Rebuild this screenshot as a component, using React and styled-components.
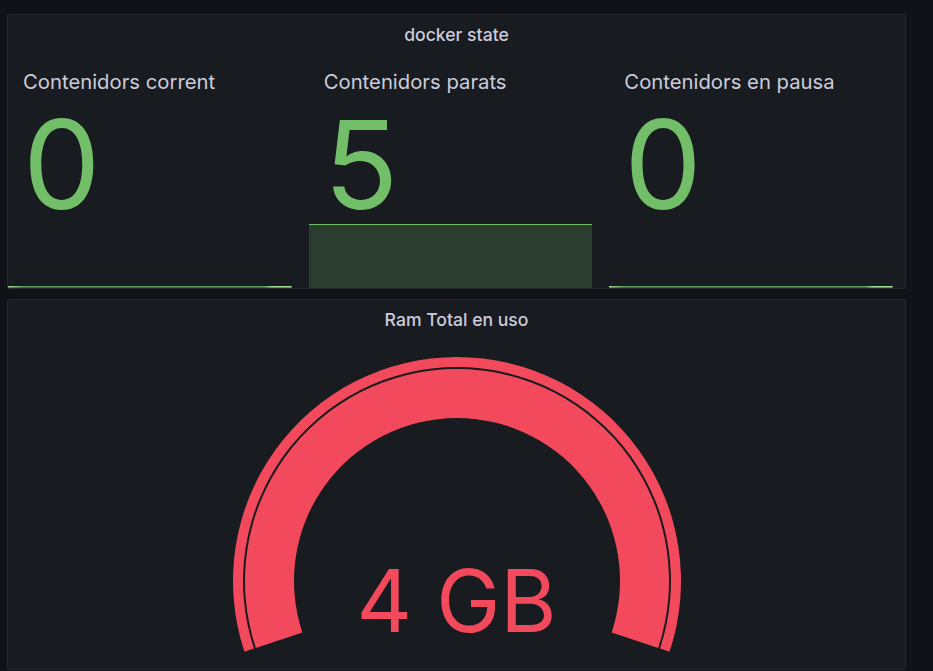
import React from "react";
import styled, { createGlobalStyle } from "styled-components";

const Global = createGlobalStyle`
  html, body { margin: 0; padding: 0; background: #111217; }
  body { font-family: Inter, "Noto Sans", sans-serif; color: #ccccdc; }
  * { box-sizing: border-box; }
`;

const Page = styled.div`
  width: 933px;
  height: 671px;
  overflow: hidden;
  padding: 14px 0 0 7px;
  display: flex;
  flex-direction: column;
  gap: 10px;
`;

const Panel = styled.section`
  width: 899px;
  height: ${(p) => p.$h}px;
  flex: none;
  background: #181b1f;
  border: 1px solid #24272e;
  border-radius: 2px;
  display: flex;
  flex-direction: column;
  overflow: hidden;
`;

const Header = styled.header`
  height: 40px;
  flex: none;
  display: flex;
  align-items: center;
  justify-content: center;
  padding-bottom: 2px;
  font-size: 17.6px;
  font-weight: 500;
  color: #ccccdc;
`;

const StatGrid = styled.div`
  flex: 1;
  min-height: 0;
  display: grid;
  grid-template-columns: repeat(3, 1fr);
  gap: 17px;
  padding: 0 12px 0 0;
`;

const StatCell = styled.div`
  display: flex;
  flex-direction: column;
  min-width: 0;
  min-height: 0;
`;

const StatLabel = styled.div`
  flex: none;
  margin-top: 15px;
  padding-left: 15px;
  font-size: 20.3px;
  line-height: 24px;
  color: #ccccdc;
  white-space: nowrap;
`;

const StatValue = styled.div`
  flex: none;
  margin-top: 21px;
  padding-left: 15px;
  font-size: 123px;
  line-height: 100px;
  height: 100px;
  color: #73bf69;
  letter-spacing: -1px;
`;

const Spark = styled.svg`
  flex: none;
  margin-top: auto;
  display: block;
  width: 100%;
  height: 64px;
`;

const GaugeBody = styled.div`
  flex: 1;
  display: flex;
  justify-content: center;
`;

const GaugeWrap = styled.div`
  position: relative;
  width: 460px;
  height: 100%;
`;

const GaugeValue = styled.div`
  position: absolute;
  left: 0;
  right: 0;
  top: 218px;
  text-align: center;
  font-size: 86px;
  line-height: 1;
  color: #f2495c;
`;

function Sparkline({ filled, id }) {
  return (
    <Spark viewBox="0 0 284 64" preserveAspectRatio="none">
      <defs>
        <linearGradient id={id} x1="0" x2="1" y1="0" y2="0">
          <stop offset="0" stopColor="#9fdc94" />
          <stop offset="0.06" stopColor="#73bf69" stopOpacity="0.75" />
          <stop offset="0.9" stopColor="#73bf69" stopOpacity="0.75" />
          <stop offset="0.93" stopColor="#9fdc94" />
        </linearGradient>
      </defs>
      {filled ? (
        <>
          <rect x="0" y="0" width="284" height="64" fill="#2a3d2e" />
          <rect x="0" y="0" width="284" height="1" fill="#73bf69" />
        </>
      ) : (
        <rect x="0" y="62" width="284" height="1.6" fill={`url(#${id})`} />
      )}
    </Spark>
  );
}

function bandPath(cx, cy, r1, r2, a0, a1) {
  const rad = (d) => (d * Math.PI) / 180;
  const pt = (r, a) => [cx + r * Math.cos(rad(a)), cy - r * Math.sin(rad(a))];
  const [ox0, oy0] = pt(r2, a0);
  const [ox1, oy1] = pt(r2, a1);
  const [ix1, iy1] = pt(r1, a1);
  const [ix0, iy0] = pt(r1, a0);
  return `M${ox0} ${oy0} A${r2} ${r2} 0 1 1 ${ox1} ${oy1} L${ix1} ${iy1} A${r1} ${r1} 0 1 0 ${ix0} ${iy0} Z`;
}

function Gauge() {
  const cx = 230;
  const cy = 241;
  const a0 = 198.4;
  const a1 = -18.4;
  return (
    <GaugeWrap>
      <svg width="460" height="330" viewBox="0 0 460 330">
        <path d={bandPath(cx, cy, 214, 224, a0, a1)} fill="#f2495c" />
        <path d={bandPath(cx, cy, 163, 212, a0, a1)} fill="#f2495c" />
      </svg>
      <GaugeValue>4 GB</GaugeValue>
    </GaugeWrap>
  );
}

const stats = [
  { label: "Contenidors corrent", value: "0", filled: false },
  { label: "Contenidors parats", value: "5", filled: true },
  { label: "Contenidors en pausa", value: "0", filled: false },
];

export default function App() {
  return (
    <>
      <Global />
      <Page>
        <Panel $h={275}>
          <Header>docker state</Header>
          <StatGrid>
            {stats.map((s, i) => (
              <StatCell key={s.label}>
                <StatLabel>{s.label}</StatLabel>
                <StatValue>{s.value}</StatValue>
                <Sparkline filled={s.filled} id={`spark${i}`} />
              </StatCell>
            ))}
          </StatGrid>
        </Panel>
        <Panel $h={371}>
          <Header>Ram Total en uso</Header>
          <GaugeBody>
            <Gauge />
          </GaugeBody>
        </Panel>
      </Page>
    </>
  );
}
